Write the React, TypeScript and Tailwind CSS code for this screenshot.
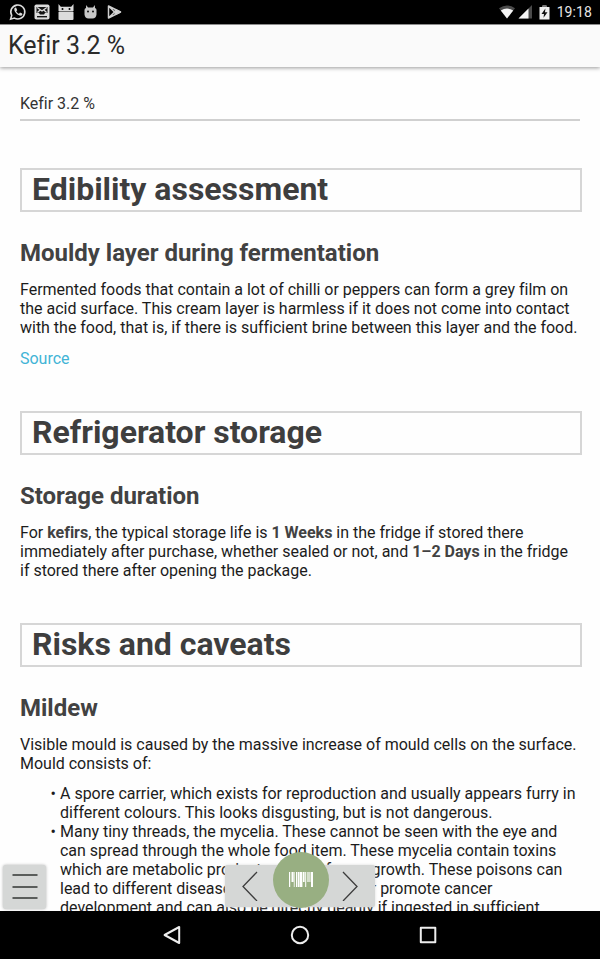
import type { ReactNode } from 'react';

function StatusBar() {
  return (
    <div className="flex h-6 shrink-0 items-center bg-black pr-[8px] pl-[9px] text-[#dcdcdc]">
      <svg width="18" height="18" viewBox="0 0 18 18" fill="none" stroke="#dcdcdc" strokeWidth="1.6">
        <path d="M1.6 16.2 L2.7 12.4 A7 7 0 1 1 5.4 15.1 Z" />
        <path d="M6.2 4.6 C4.6 5.8 5 8 7.4 10.6 C9.8 12.9 12.4 13.4 13.4 11.8 L13.2 10.6 L11 9.6 L10 10.8 C8.8 10.3 7.8 9.4 7.2 8.2 L8.2 7.2 L7.2 4.8 Z" fill="#dcdcdc" stroke="none" />
      </svg>
      <svg className="ml-[7px]" width="16" height="16" viewBox="0 0 16 16">
        <rect x="0.5" y="0.5" width="15" height="15" rx="1.8" fill="#dcdcdc" />
        <path d="M2.5 3 H13.5 V9 H11 L10 10.6 H6 L5 9 H2.5 Z" fill="#151515" />
        <path d="M3.2 3.4 L8 7 L12.8 3.4 M3.4 8.4 L6.2 6 M12.6 8.4 L9.8 6" fill="none" stroke="#dcdcdc" strokeWidth="1.3" />
        <path d="M3 12 H13 V13.4 H3 Z" fill="#151515" />
      </svg>
      <svg className="ml-[8px]" width="16" height="18" viewBox="0 0 16 18" fill="#dcdcdc">
        <path d="M0.5 1 L2.8 3.8 H13.2 L15.5 1 V8 H0.5 Z" />
        <rect x="0.5" y="8.6" width="15" height="8.4" rx="1" />
        <circle cx="4.5" cy="6" r="1" fill="#000" />
        <circle cx="11.5" cy="6" r="1" fill="#000" />
      </svg>
      <svg className="ml-[10px]" width="13" height="16" viewBox="0 0 13 16" fill="#c8c8c8">
        <path d="M2.2 1 L4 3.4 H9 L10.8 1 L11 4 Q12.5 4.4 12.5 6 V10.5 Q12 14.4 8.5 14.4 H4.5 Q1 14.4 0.5 10.5 V6 Q0.5 4.4 2 4 Z" />
        <circle cx="4" cy="7.6" r="1" fill="#111" />
        <circle cx="9" cy="7.6" r="1" fill="#111" />
      </svg>
      <svg className="ml-[10px]" width="15" height="14" viewBox="0 0 15 14" fill="none" stroke="#cfcfcf" strokeWidth="1.5" strokeLinejoin="round">
        <path d="M1.5 1 L13.5 7 L1.5 13 Z M1.5 1 L9.5 9 M1.5 13 L9.5 5" />
        <path d="M9 5 L13 7 L9 9 L7.3 7 Z" fill="#dcdcdc" />
      </svg>
      <svg className="ml-auto" width="16" height="14" viewBox="0 0 16 14">
        <path d="M0 3.2 Q8 -2.4 16 3.2 L8 13.5 Z" fill="#4a4a4a" />
        <path d="M1.8 5.4 Q8 1.8 14.2 5.4 L8 13.5 Z" fill="#f4f4f4" />
      </svg>
      <svg className="ml-[3px]" width="14" height="14" viewBox="0 0 14 14">
        <path d="M14 0 V13.5 H0.5 Z" fill="#4a4a4a" />
        <path d="M10.5 3.5 V13.5 H0.5 Z" fill="#f4f4f4" />
      </svg>
      <svg className="ml-[7px]" width="11" height="15" viewBox="0 0 11 15">
        <path d="M3.5 0.5 H7.5 V2 H10.5 V14.5 H0.5 V2 H3.5 Z" fill="#f0f0f0" />
        <path d="M3.5 0.5 H7.5 V2 H3.5 Z" fill="#777" />
        <path d="M6.4 3.5 L2.5 9 H5 L4.5 12.7 L8.5 7.3 H6 Z" fill="#111" />
      </svg>
      <span className="ml-[7px] text-[14px] leading-6 tracking-[0.1px] text-[#e6e6e6]">19:18</span>
    </div>
  );
}

function Section({ title, children }: { title: string; children: ReactNode }) {
  return (
    <section className="pb-[43px]">
      <h1 className="h-[44px] w-[562px] border-2 border-[#d6d6d6] pl-[10px] text-[32px] leading-[38px] font-bold text-[#3e3e3e]">
        {title}
      </h1>
      {children}
    </section>
  );
}

function Subheading({ children }: { children: ReactNode }) {
  return <h2 className="mt-[27px] mb-[12px] text-[24px] leading-[29px] font-bold text-[#424242]">{children}</h2>;
}

function Strong({ children }: { children: ReactNode }) {
  return <b className="font-bold text-[#424242]">{children}</b>;
}

function BottomNav() {
  return (
    <div className="flex h-12 shrink-0 items-center justify-center bg-black">
      <svg width="280" height="24" viewBox="0 0 280 24" fill="none" stroke="#ededed" strokeWidth="2" strokeLinejoin="round">
        <path d="M19.2 4 V20 L4.6 12 Z" />
        <circle cx="140" cy="12" r="8.2" />
        <rect x="260.8" y="4.8" width="14.5" height="14.5" />
      </svg>
    </div>
  );
}

export default function App() {
  return (
    <div className="relative flex h-[959px] w-[600px] flex-col overflow-hidden bg-[#fefefe] font-['Roboto','Liberation_Sans',sans-serif] text-[16px] leading-[19px] tracking-[-0.012px] text-[#1c1c1c]">
      <StatusBar />
      <header className="z-10 h-[43px] shrink-0 border-t border-[#8c8c8c] bg-[#fafafa] pl-[8px] text-[25px] leading-[42px] text-[#2b2b2b] shadow-[0_1px_4px_rgba(0,0,0,0.4)]">
        Kefir 3.2 %
      </header>
      <main className="min-h-0 flex-1 overflow-hidden px-5 whitespace-nowrap">
        <div className="mt-[26px] mb-[47px] h-[28px] border-b-2 border-[#d0d0d0] leading-[21px] text-[#333]">
          Kefir 3.2 %
        </div>
        <Section title="Edibility assessment">
          <Subheading>Mouldy layer during fermentation</Subheading>
          <p>
            Fermented foods that contain a lot of chilli or peppers can form a grey film on<br />
            the acid surface. This cream layer is harmless if it does not come into contact<br />
            with the food, that is, if there is sufficient brine between this layer and the food.
          </p>
          <p className="mt-[12px] text-[#42b4d6]">Source</p>
        </Section>
        <Section title="Refrigerator storage">
          <Subheading>Storage duration</Subheading>
          <p>
            For <Strong>kefirs</Strong>, the typical storage life is <Strong>1 Weeks</Strong> in the fridge if stored there<br />
            immediately after purchase, whether sealed or not, and <Strong>1–2 Days</Strong> in the fridge<br />
            if stored there after opening the package.
          </p>
        </Section>
        <Section title="Risks and caveats">
          <Subheading>Mildew</Subheading>
          <p>
            Visible mould is caused by the massive increase of mould cells on the surface.<br />
            Mould consists of:
          </p>
          <ul className="mt-[11px]">
            <li className="flex">
              <span className="w-10 shrink-0 pr-[4px] text-right">•</span>
              <span>
                A spore carrier, which exists for reproduction and usually appears furry in<br />
                different colours. This looks disgusting, but is not dangerous.
              </span>
            </li>
            <li className="flex">
              <span className="w-10 shrink-0 pr-[4px] text-right">•</span>
              <span>
                Many tiny threads, the mycelia. These cannot be seen with the eye and<br />
                can spread through the whole food item. These mycelia contain toxins<br />
                which are metabolic products <span className="pr-[8px]">arising from</span> growth. These poisons can<br />
                lead to different diseases <span className="pr-[4px]">in humans,</span> and/or promote cancer<br />
                development and can also be directly deadly if ingested in sufficient
              </span>
            </li>
          </ul>
        </Section>
      </main>
      <BottomNav />
      <button className="absolute top-[865px] left-[3px] flex h-[44px] w-[43px] items-center justify-center rounded-[3px] bg-[#d5d7d6] shadow-[0_0_3px_rgba(0,0,0,0.3)]">
        <svg width="26" height="26" viewBox="0 0 26 26" stroke="#5a5d5b" strokeWidth="2">
          <path d="M0.5 1 H25.5 M0.5 13 H25.5 M0.5 24 H25.5" />
        </svg>
      </button>
      <div className="absolute top-[865px] left-[225px] flex h-[42px] w-[150px] items-center justify-between rounded-[2px] bg-[#d5d7d6] px-[17px] shadow-[0_0_3px_rgba(213,215,214,0.9)]">
        <svg width="16" height="30" viewBox="0 0 16 30" fill="none" stroke="#3c3c3c" strokeWidth="1.3">
          <path d="M15 1 L1 15.5 L15 30" />
        </svg>
        <svg width="16" height="30" viewBox="0 0 16 30" fill="none" stroke="#3c3c3c" strokeWidth="1.3">
          <path d="M1 1 L15 15.5 L1 30" />
        </svg>
      </div>
      <button className="absolute top-[851.5px] left-[272.5px] flex h-[56px] w-[56px] items-center justify-center rounded-full bg-[#98af82]">
        <svg width="26" height="17" viewBox="0 0 26 17" fill="#fff">
          <path d="M1 1 H2.2 V16 H1 Z M3.5 1 H5.5 V11 H3.5 Z M5.8 1 H6.6 V16 H5.8 Z M8 1 H9 V16 H8 Z M9.6 1 H11.6 V16 H9.6 Z M12 1 H14.4 V16 H12 Z M15 1 H16.6 V11 H15 Z M17.2 1 H18.2 V16 H17.2 Z M19.4 1 H20.6 V11 H19.4 Z M21.4 1 H22.4 V11 H21.4 Z M23 1 H25 V16 H23 Z" />
        </svg>
      </button>
    </div>
  );
}
